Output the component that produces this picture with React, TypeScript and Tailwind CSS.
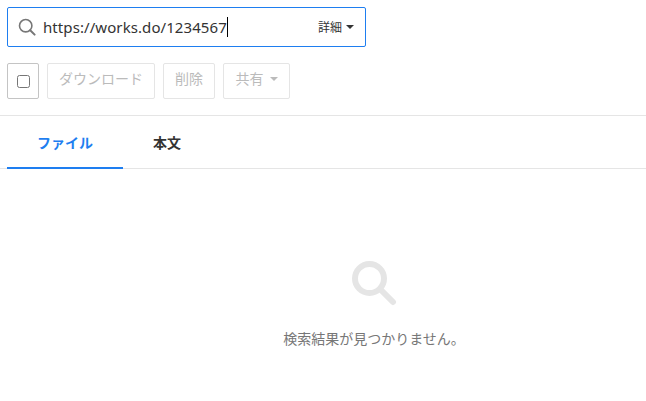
const font = { fontFamily: '"Noto Sans CJK JP", "Noto Sans", sans-serif' };

function Caret({ color }: { color: string }) {
  return (
    <svg width="8" height="4" viewBox="0 0 8 4" className="block">
      <path d="M0 0H8L4 4Z" fill={color} />
    </svg>
  );
}

export default function App() {
  return (
    <div className="w-[646px] h-[401px] overflow-hidden bg-white flex flex-col" style={{ fontFamily: '"Liberation Sans", "Noto Sans CJK JP", sans-serif' }}>
      <div className="px-[7px] pt-[7px]">
        <div className="w-[359px] h-[40px] border border-[#1e7ef0] rounded-[2px] flex items-center pl-[10px] pr-[11px]">
          <svg width="18" height="18" viewBox="0 0 18 18" fill="none" stroke="#777777" className="shrink-0 mr-[7px]">
            <circle cx="7.7" cy="7.7" r="6.2" strokeWidth="1.6" />
            <path d="M12.2 12.2L16.6 16.6" strokeWidth="2" strokeLinecap="round" />
          </svg>
          <div className="flex items-center text-[15px] text-[#333] tracking-[0.08px]" style={{ fontFamily: '"Noto Sans", sans-serif' }}>
            https://works.do/1234567
            <span className="inline-block w-px h-[20px] bg-black" />
          </div>
          <div className="ml-auto flex items-center gap-[4px] text-[12px] text-[#333] pb-[1px]" style={font}>
            詳細
            <Caret color="#333333" />
          </div>
        </div>
      </div>

      <div className="px-[7px] pt-[16px] flex gap-[8px] text-[14px] text-[#bbbbbb]" style={font}>
        <div className="w-[32px] h-[36px] border border-[#c4c4c4] rounded-[2px] flex items-center justify-center">
          <div className="w-[13px] h-[13px] border border-[#767676] rounded-[2.5px]" />
        </div>
        <div className="w-[108px] h-[36px] border border-[#e5e5e5] rounded-[2px] flex items-center justify-center pb-[5px]">ダウンロード</div>
        <div className="w-[52px] h-[36px] border border-[#e5e5e5] rounded-[2px] flex items-center justify-center pb-[5px]">削除</div>
        <div className="w-[67px] h-[36px] border border-[#e5e5e5] rounded-[2px] flex items-center justify-center gap-[6px] pb-[5px]">
          共有
          <Caret color="#bbbbbb" />
        </div>
      </div>

      <div className="mt-[16px] border-t border-b border-[#e5e5e5] h-[54px] px-[7px] flex text-[14px] font-bold" style={font}>
        <div className="w-[116px] h-[53px] flex items-center justify-center text-[#1e7ef0] border-b-2 border-[#1e7ef0] pt-[2px]">ファイル</div>
        <div className="w-[88px] h-[53px] flex items-center justify-center text-[#333]">本文</div>
      </div>

      <div className="pl-[98px] pt-[91px] flex flex-col items-center" style={font}>
        <svg width="46" height="46" viewBox="0 0 46 46" fill="none" stroke="#e5e5e5" className="ml-[3px]">
          <circle cx="18.5" cy="18.5" r="14.5" strokeWidth="6" />
          <path d="M30 30L42 42" strokeWidth="6" strokeLinecap="round" />
        </svg>
        <div className="mt-[22px] ml-[4px] text-[14px] text-[#777777]">検索結果が見つかりません。</div>
      </div>
    </div>
  );
}
